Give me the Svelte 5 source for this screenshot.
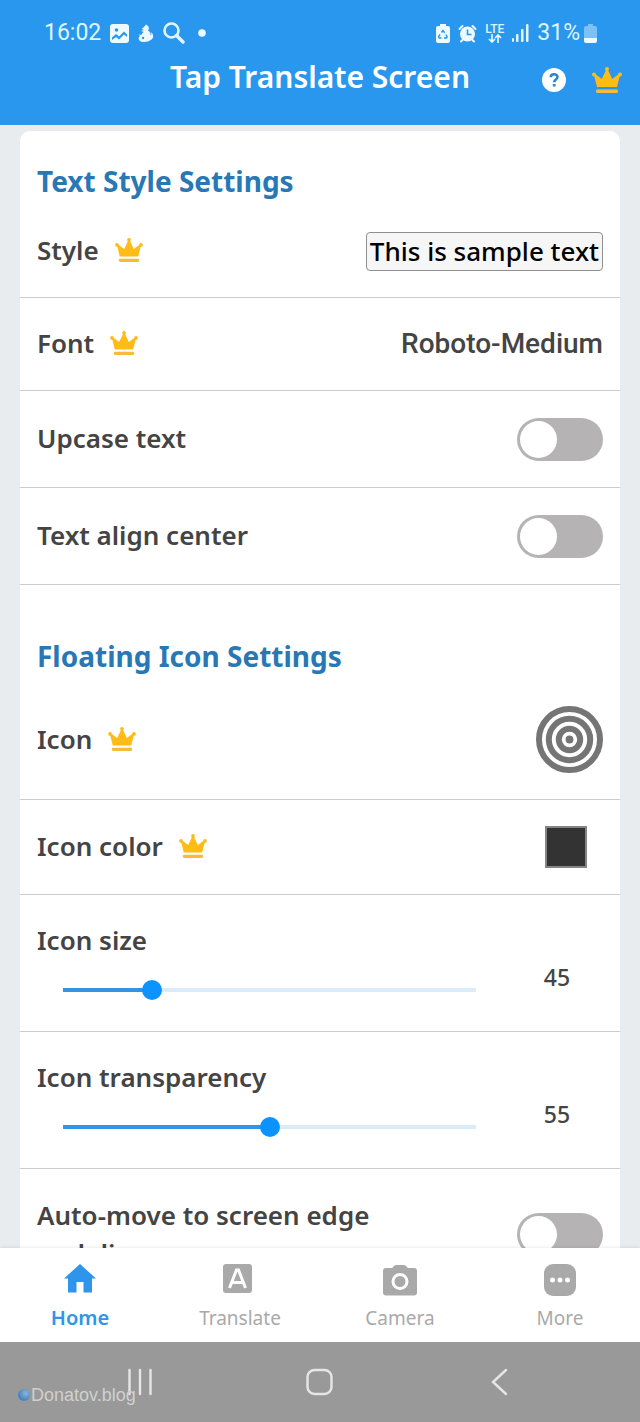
<script lang="ts">
	let upcase = $state(false);
	let centered = $state(false);
	let autoMove = $state(false);
	let iconSize = $state(45);
	let transparency = $state(55);
	let activeTab = $state('Home');

	const sizeRange = { min: 30, max: 105 };
	const transparencyRange = { min: 10, max: 100 };

	function fill(value: number, range: { min: number; max: number }) {
		return ((value - range.min) / (range.max - range.min)) * 100;
	}
</script>

{#snippet crown()}
	<svg class="crown" viewBox="0 0 30 26" aria-hidden="true">
		<g fill="#ffbb16">
			<path d="M5 20 2 8l1.500-.8L9.800 12l4.200-9h2l4.200 9 6.300-4.800L28 8l-3 12z" />
			<circle cx="15" cy="2" r="2" />
			<circle cx="2" cy="7.500" r="2" />
			<circle cx="28" cy="7.500" r="2" />
		</g>
		<rect x="4" y="22.500" width="22" height="3.400" rx="1.400" fill="#f3bd38" />
	</svg>
{/snippet}

<div class="screen">
	<header>
		<div class="status">
			<div class="status-left">
				<span>16:02</span>
				<svg width="19" height="19" viewBox="0 0 19 19" aria-hidden="true">
					<rect width="19" height="19" rx="3" fill="#edfaff" />
					<circle cx="6.500" cy="6" r="1.800" fill="#2a97ee" />
					<path d="M2 13.500 6 10l3 2.500L14 7.500l3 3v2.500l-3-2.500-5 5-3-2.500-4 3z" fill="#2a97ee" />
				</svg>
				<svg width="16" height="19" viewBox="0 0 16 19" aria-hidden="true">
					<path
						d="M6 3 8 .5 10 2c1.500 1.500 1 3.500 0 4.500 2 1 3 3 2.500 5 1-.5 1-2 .5-3.500 3 2 3 7-.5 8-1.500 2-9 3-11 .5C0 15 .5 13 2 12L.5 10.500 3.500 11c0-1 1-2.500 2.500-3L3 7l3-1-2.500-1z"
						fill="#edfaff"
					/>
					<circle cx="5" cy="14" r="1.200" fill="#2a97ee" />
				</svg>
				<svg width="22" height="22" viewBox="0 0 22 22" fill="none" stroke="#dff6ff" aria-hidden="true">
					<circle cx="8.500" cy="8.500" r="7" stroke-width="2.600" />
					<path d="m13.500 13.500 6.500 6.500" stroke-width="3.400" stroke-linecap="round" />
				</svg>
				<svg class="more-dot" width="8" height="8" viewBox="0 0 8 8" aria-hidden="true">
					<circle cx="4" cy="4" r="3.800" fill="#edfaff" />
				</svg>
			</div>
			<div class="status-right">
				<svg width="14" height="19" viewBox="0 0 14 19" aria-hidden="true">
					<path d="M4 0h6v2h2a2 2 0 0 1 2 2v13a2 2 0 0 1-2 2H2a2 2 0 0 1-2-2V4a2 2 0 0 1 2-2h2z" fill="#edfaff" />
					<path
						d="m5.500 8.500 1.500-2 1.700 2.300M10 10.500l1.200 2.500-1 1H8M5.500 14H3.300l-.8-1.200L4 10.300"
						fill="none"
						stroke="#2a97ee"
						stroke-width="1.400"
					/>
				</svg>
				<svg width="19" height="19" viewBox="0 0 19 19" aria-hidden="true">
					<path
						d="m1.500 5 3-3M17.500 5l-3-3M3 17.500l2-2M16 17.500l-2-2"
						stroke="#edfaff"
						stroke-width="2"
						stroke-linecap="round"
					/>
					<circle cx="9.500" cy="10" r="7.500" fill="#edfaff" />
					<path d="M9.500 5.500v5h4" fill="none" stroke="#2a97ee" stroke-width="1.600" />
				</svg>
				<div class="lte">
					<span>LTE</span>
					<svg width="16" height="9" viewBox="0 0 16 9" fill="none" stroke="#edfaff" stroke-width="1.600" aria-hidden="true">
						<path d="M5 0v8M2 5l3 3 3-3M11 9V1M8 4l3-3 3 3" />
					</svg>
				</div>
				<svg width="17" height="18" viewBox="0 0 17 18" aria-hidden="true">
					<g fill="#dff6ff">
						<rect y="14" width="2" height="4" rx="1" />
						<rect x="4" y="10" width="2.500" height="8" rx="1" />
						<rect x="9" y="5" width="2.500" height="13" rx="1" />
						<rect x="14" width="2.500" height="18" rx="1" />
					</g>
				</svg>
				<span class="percent">31%</span>
				<svg width="13" height="19" viewBox="0 0 13 19" aria-hidden="true">
					<path d="M4 0h5v2h2a2 2 0 0 1 2 2v10H0V4a2 2 0 0 1 2-2h2z" fill="#7cc0f6" />
					<path d="M0 14h13v3a2 2 0 0 1-2 2H2a2 2 0 0 1-2-2z" fill="#edfaff" />
				</svg>
			</div>
		</div>
		<div class="title-bar">
			<h1>Tap Translate Screen</h1>
			<div class="actions">
				<button aria-label="Help">
					<svg width="24" height="24" viewBox="0 0 24 24" aria-hidden="true">
						<circle cx="12" cy="12" r="12" fill="#fff" />
						<path
							d="M8.700 9.300c0-4 6.800-4 6.800-.3 0 2.600-3.300 2.500-3.300 5.300"
							fill="none"
							stroke="#2a85d0"
							stroke-width="2.500"
						/>
						<rect x="10.800" y="16" width="2.800" height="2.600" rx=".6" fill="#2a85d0" />
					</svg>
				</button>
				<button class="premium" aria-label="Premium">{@render crown()}</button>
			</div>
		</div>
	</header>

	<main>
		<div class="card">
			<h2>Text Style Settings</h2>
			<div class="row">
				<span class="label">Style {@render crown()}</span>
				<button class="sample">This is sample text</button>
			</div>
			<div class="row">
				<span class="label">Font {@render crown()}</span>
				<button class="font-name">Roboto-Medium</button>
			</div>
			<div class="row toggle">
				<label for="upcase">Upcase text</label>
				<input id="upcase" type="checkbox" role="switch" bind:checked={upcase} />
			</div>
			<div class="row toggle">
				<label for="centered">Text align center</label>
				<input id="centered" type="checkbox" role="switch" bind:checked={centered} />
			</div>

			<h2 class="next">Floating Icon Settings</h2>
			<div class="row icon-row">
				<span class="label">Icon {@render crown()}</span>
				<button aria-label="Choose icon">
					<svg width="67" height="67" viewBox="0 0 67 67" fill="none" stroke="#757575" stroke-width="6" aria-hidden="true">
						<circle cx="33.500" cy="33.500" r="30.500" />
						<circle cx="33.500" cy="33.500" r="20.700" />
						<circle cx="33.500" cy="33.500" r="10.700" />
						<circle cx="33.500" cy="33.500" r="3.900" fill="#757575" stroke="none" />
					</svg>
				</button>
			</div>
			<div class="row color-row">
				<span class="label">Icon color {@render crown()}</span>
				<button class="swatch" aria-label="Choose icon color"></button>
			</div>
			<div class="row slider-row">
				<div class="slider">
					<label for="size">Icon size</label>
					<input
						id="size"
						type="range"
						{...sizeRange}
						bind:value={iconSize}
						style:--fill="{fill(iconSize, sizeRange)}%"
					/>
				</div>
				<output for="size">{iconSize}</output>
			</div>
			<div class="row slider-row">
				<div class="slider">
					<label for="transparency">Icon transparency</label>
					<input
						id="transparency"
						type="range"
						{...transparencyRange}
						bind:value={transparency}
						style:--fill="{fill(transparency, transparencyRange)}%"
					/>
				</div>
				<output for="transparency">{transparency}</output>
			</div>
			<div class="row auto-row">
				<label for="auto">Auto-move to screen edge and dim</label>
				<input id="auto" type="checkbox" role="switch" bind:checked={autoMove} />
			</div>
		</div>
	</main>

	<nav class="tabs">
		<button class:active={activeTab === 'Home'} onclick={() => (activeTab = 'Home')}>
			<svg width="34" height="34" viewBox="0 0 34 34" fill="currentColor" aria-hidden="true">
				<path d="M17 2 33 16.500h-4V30.500h-8.500V20h-7v10.500H5v-14H1z" />
			</svg>
			<span>Home</span>
		</button>
		<button class:active={activeTab === 'Translate'} onclick={() => (activeTab = 'Translate')}>
			<svg width="34" height="34" viewBox="0 0 34 34" aria-hidden="true">
				<rect x="0" y="2" width="29" height="29" rx="3" fill="currentColor" />
				<path d="M6.500 26 13.500 8h2l7 18M9 20.500h11" fill="none" stroke="#fff" stroke-width="3" />
			</svg>
			<span>Translate</span>
		</button>
		<button class:active={activeTab === 'Camera'} onclick={() => (activeTab = 'Camera')}>
			<svg width="34" height="34" viewBox="0 0 34 34" aria-hidden="true">
				<path
					d="M3 6h6l2.500-2.500Q12 3 13 3h8q1 0 1.500.5L25 6h6a3 3 0 0 1 3 3v21.500a3 3 0 0 1-3 3H3a3 3 0 0 1-3-3V9a3 3 0 0 1 3-3z"
					fill="currentColor"
				/>
				<circle cx="17" cy="19.500" r="7" fill="none" stroke="#fff" stroke-width="3" />
			</svg>
			<span>Camera</span>
		</button>
		<button class:active={activeTab === 'More'} onclick={() => (activeTab = 'More')}>
			<svg width="34" height="34" viewBox="0 0 34 34" aria-hidden="true">
				<rect x="1" y="2" width="32" height="32" rx="9" fill="currentColor" />
				<g fill="#fff">
					<circle cx="9.500" cy="18" r="2.500" />
					<circle cx="17" cy="18" r="2.500" />
					<circle cx="24.500" cy="18" r="2.500" />
				</g>
			</svg>
			<span>More</span>
		</button>
	</nav>

	<div class="system">
		<button aria-label="Recent apps">
			<svg width="26" height="28" viewBox="0 0 26 28" stroke="#e6e6e6" stroke-width="2.400" stroke-linecap="round" aria-hidden="true">
				<path d="M2.500 2v24M13 2v24M23.500 2v24" />
			</svg>
		</button>
		<button aria-label="Home screen">
			<svg width="28" height="28" viewBox="0 0 28 28" fill="none" stroke="#e6e6e6" stroke-width="2.400" aria-hidden="true">
				<rect x="1.500" y="2" width="24" height="24" rx="7" />
			</svg>
		</button>
		<button aria-label="Back">
			<svg width="18" height="28" viewBox="0 0 18 28" fill="none" stroke="#e6e6e6" stroke-width="2.400" stroke-linecap="round" aria-hidden="true">
				<path d="M15 2 2 14l13 12" />
			</svg>
		</button>
		<div class="watermark"><i></i>Donatov.blog</div>
	</div>
</div>

<style>
	:global(body) {
		margin: 0;
	}

	.screen {
		display: flex;
		flex-direction: column;
		height: 100vh;
		background: #e8ecef;
		color: #444;
		font-family: 'Noto Sans', sans-serif;
	}

	button {
		display: block;
		padding: 0;
		border: 0;
		background: none;
		color: inherit;
		font: inherit;
		cursor: pointer;
	}

	svg {
		display: block;
		flex: none;
	}

	header {
		flex: none;
		padding: 18px 18px 19px;
		background: #2a97ee;
		color: #fff;
	}

	.status,
	.status-left,
	.status-right {
		display: flex;
		align-items: center;
	}

	.status {
		justify-content: space-between;
		height: 30px;
		padding: 0 25px 0 26px;
		color: #dff6ff;
		font: 23px/30px Roboto, sans-serif;
	}

	.status-left {
		gap: 9px;
	}

	.status-right {
		gap: 8px;
	}

	.more-dot {
		margin-left: 4px;
	}

	.lte {
		display: flex;
		flex-direction: column;
		align-items: center;
		font: 500 12px/10px Roboto, sans-serif;
	}

	.percent {
		margin-right: -4px;
	}

	.title-bar {
		display: grid;
		grid-template-columns: 1fr auto 1fr;
		align-items: center;
		height: 53px;
		margin-top: 5px;
	}

	h1 {
		grid-column: 2;
		margin: 0;
		padding-bottom: 6px;
		font-size: 30px;
		font-weight: 600;
		line-height: 40px;
	}

	.actions {
		display: flex;
		justify-content: flex-end;
		align-items: center;
		gap: 26px;
	}

	.crown {
		width: 28px;
		height: 24px;
	}

	.premium .crown {
		width: 30px;
		height: 26px;
	}

	main {
		flex: 1;
		min-height: 0;
		padding: 6px 20px 0;
		overflow: hidden;
	}

	.card {
		border-radius: 10px;
		background: #fff;
	}

	h2 {
		margin: 0;
		padding: 33px 17px 7px;
		color: #2878b5;
		font-size: 28px;
		font-weight: 700;
		line-height: 34px;
	}

	h2.next {
		padding-top: 54px;
	}

	.row {
		display: flex;
		justify-content: space-between;
		align-items: center;
		box-sizing: border-box;
		min-height: 93px;
		padding: 0 17px;
		border-bottom: 1px solid #ccc;
		font-size: 26px;
		font-weight: 500;
		line-height: 38px;
	}

	.row.toggle {
		min-height: 97px;
	}

	.row.icon-row {
		min-height: 120px;
	}

	.row.color-row {
		min-height: 95px;
	}

	.row.slider-row {
		align-items: flex-start;
		min-height: 137px;
	}

	.row.auto-row {
		min-height: 132px;
	}

	.auto-row label {
		max-width: 350px;
	}

	.label,
	label {
		padding-bottom: 2px;
		font-weight: 600;
	}

	.label {
		display: flex;
		align-items: center;
		gap: 16px;
	}

	.sample {
		padding: 0 3px;
		border: 1px solid #8f8f8f;
		border-radius: 4px;
		background: #f6f6f6;
		color: #000;
		line-height: 37px;
	}

	.font-name {
		font-family: Roboto, sans-serif;
		font-size: 28px;
	}

	input[type='checkbox'] {
		flex: none;
		appearance: none;
		width: 86px;
		height: 43px;
		margin: 0;
		padding: 3px;
		border-radius: 22px;
		background: #b6b3b4;
		cursor: pointer;
	}

	input[type='checkbox']::before {
		content: '';
		display: block;
		width: 37px;
		height: 37px;
		border-radius: 50%;
		background: #fff;
	}

	input[type='checkbox']:checked {
		background: #2a97ee;
	}

	input[type='checkbox']:checked::before {
		margin-left: auto;
	}

	.swatch {
		width: 42px;
		height: 42px;
		margin-right: 16px;
		border: 2px solid #858585;
		background: #333;
	}

	.slider {
		display: flex;
		flex: 1;
		flex-direction: column;
		padding-top: 26px;
	}

	input[type='range'] {
		appearance: none;
		height: 20px;
		margin: 19px 0 0 26px;
		background: none;
	}

	input[type='range']::-webkit-slider-runnable-track {
		height: 4px;
		background: linear-gradient(to right, #3394e4 var(--fill), #daebf9 var(--fill));
	}

	input[type='range']::-webkit-slider-thumb {
		appearance: none;
		width: 20px;
		height: 20px;
		margin-top: -8px;
		border-radius: 50%;
		background: #0b94ff;
	}

	output {
		width: 92px;
		margin-left: 35px;
		padding-top: 63px;
		font-size: 23px;
		text-align: center;
	}

	.tabs {
		display: grid;
		flex: none;
		grid-template-columns: repeat(4, 1fr);
		height: 94px;
		background: #fff;
		box-shadow: 0 -1px 3px rgb(0 0 0 / 8%);
	}

	.tabs button {
		display: flex;
		flex-direction: column;
		align-items: center;
		gap: 6px;
		padding-top: 14px;
		color: #a9a9a9;
		font-size: 19px;
		line-height: 32px;
	}

	.tabs .active {
		color: #2f95ea;
		font-size: 20px;
		font-weight: 600;
	}

	.system {
		position: relative;
		display: grid;
		flex: none;
		grid-template-columns: repeat(3, 1fr);
		place-items: center;
		height: 80px;
		padding: 0 50px;
		background: #999;
	}

	.watermark {
		position: absolute;
		bottom: 16px;
		left: 18px;
		display: flex;
		align-items: center;
		gap: 1px;
		color: #d0d0d0;
		font: 18px/22px 'Liberation Sans', sans-serif;
	}

	.watermark i {
		width: 12px;
		height: 12px;
		border-radius: 50%;
		background: radial-gradient(circle at 65% 35%, #8ab4dc, #4382bd 70%);
	}
</style>
